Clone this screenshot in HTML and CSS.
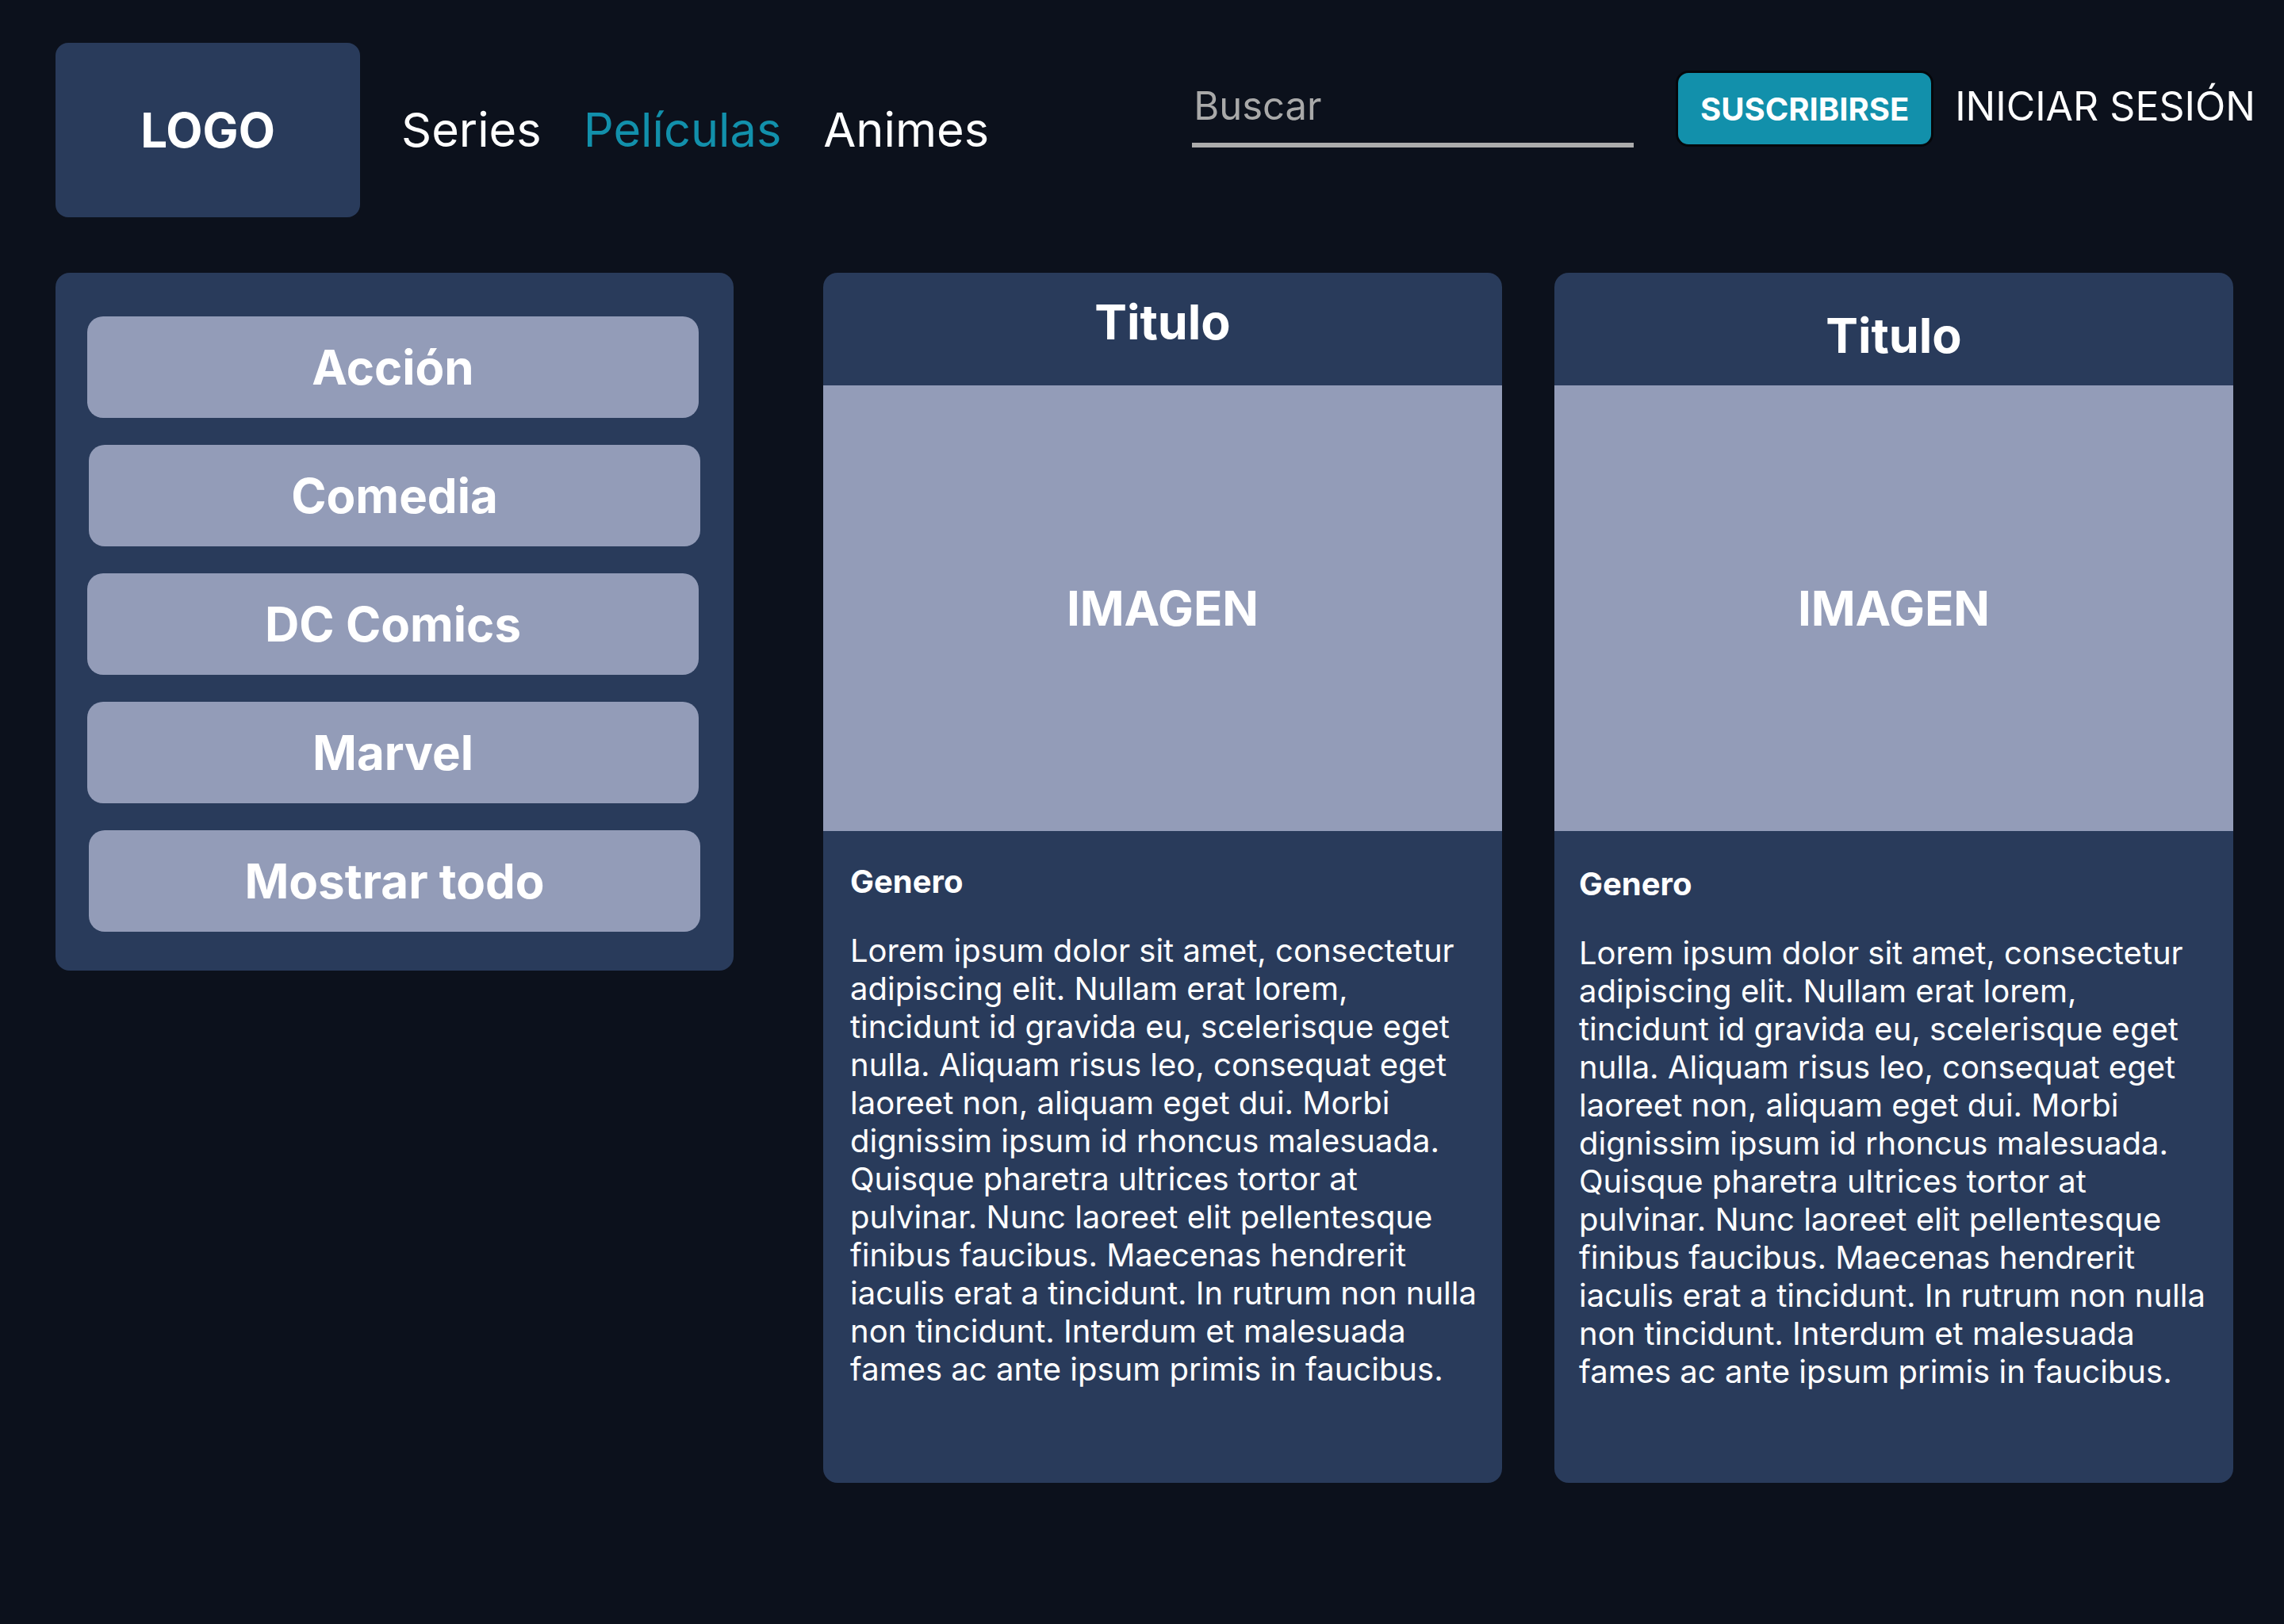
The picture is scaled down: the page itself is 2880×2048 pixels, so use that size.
FILE: index.html
```html
<!DOCTYPE html>
<html lang="es">
<head>
<meta charset="utf-8">
<title>Catálogo</title>
<link rel="stylesheet" href="styles.css">
</head>
<body>
<div class="page">
  <header class="topbar">
    <div class="logo">LOGO</div>
    <nav class="nav">
      <a class="nav-link">Series</a>
      <a class="nav-link active">Películas</a>
      <a class="nav-link">Animes</a>
    </nav>
    <div class="search">
      <span class="search-placeholder">Buscar</span>
      <span class="search-line"></span>
    </div>
    <button class="subscribe">SUSCRIBIRSE</button>
    <a class="login">INICIAR SESIÓN</a>
  </header>

  <main class="content">
    <aside class="sidebar">
      <button class="genre">Acción</button>
      <button class="genre shifted">Comedia</button>
      <button class="genre">DC Comics</button>
      <button class="genre">Marvel</button>
      <button class="genre shifted">Mostrar todo</button>
    </aside>

    <article class="card">
      <div class="card-head"><h2 class="card-title">Titulo</h2></div>
      <div class="card-image">IMAGEN</div>
      <div class="card-body">
        <h3 class="card-genre">Genero</h3>
        <p class="card-text">Lorem ipsum dolor sit amet, consectetur adipiscing elit. Nullam erat lorem, tincidunt id gravida eu, scelerisque eget nulla. Aliquam risus leo, consequat eget laoreet non, aliquam eget dui. Morbi dignissim ipsum id rhoncus malesuada. Quisque pharetra ultrices tortor at pulvinar. Nunc laoreet elit pellentesque finibus faucibus. Maecenas hendrerit iaculis erat a tincidunt. In rutrum non nulla non tincidunt. Interdum et malesuada fames ac ante ipsum primis in faucibus.</p>
      </div>
    </article>

    <article class="card card-alt">
      <div class="card-head"><h2 class="card-title">Titulo</h2></div>
      <div class="card-image">IMAGEN</div>
      <div class="card-body">
        <h3 class="card-genre">Genero</h3>
        <p class="card-text">Lorem ipsum dolor sit amet, consectetur adipiscing elit. Nullam erat lorem, tincidunt id gravida eu, scelerisque eget nulla. Aliquam risus leo, consequat eget laoreet non, aliquam eget dui. Morbi dignissim ipsum id rhoncus malesuada. Quisque pharetra ultrices tortor at pulvinar. Nunc laoreet elit pellentesque finibus faucibus. Maecenas hendrerit iaculis erat a tincidunt. In rutrum non nulla non tincidunt. Interdum et malesuada fames ac ante ipsum primis in faucibus.</p>
      </div>
    </article>
  </main>
</div>
</body>
</html>
```
FILE: styles.css
```css
* { box-sizing: border-box; }

html, body {
  margin: 0;
  padding: 0;
  background: #0c111c;
  color: #ffffff;
  font-family: Inter, "Noto Sans", "Liberation Sans", sans-serif;
}

.page {
  width: 2880px;
  min-height: 2048px;
  padding: 54px 0 0 70px;
}

/* ---------- header ---------- */
.topbar {
  display: flex;
  align-items: flex-start;
  height: 220px;
}

.logo {
  width: 384px;
  height: 220px;
  background: #293b5b;
  border-radius: 16px;
  display: flex;
  align-items: center;
  justify-content: center;
  font-size: 60px;
  font-weight: 700;
  line-height: 1;
}

.nav {
  display: flex;
  align-items: center;
  height: 220px;
  margin-left: 52px;
  gap: 53px;
}

.nav-link {
  font-size: 59.5px;
  font-weight: 400;
  line-height: 1.2;
  color: #ffffff;
  text-decoration: none;
}

.nav-link.active { color: #1290ab; }

.search {
  display: flex;
  flex-direction: column;
  margin-left: 256px;
  margin-top: 51px;
  width: 557px;
}

.search-placeholder {
  font-size: 49px;
  line-height: 1.2;
  color: #a9a9a9;
  padding-left: 2px;
}

.search-line {
  display: block;
  height: 6px;
  margin-top: 16px;
  background: #acacac;
}

.subscribe {
  margin-left: 53px;
  margin-top: 35px;
  width: 325px;
  height: 96px;
  background: #1290ab;
  border: 3px solid #05070b;
  border-radius: 16px;
  color: #ffffff;
  font-family: inherit;
  font-size: 40px;
  font-weight: 700;
  padding: 0;
}

.login {
  margin-left: 27px;
  margin-top: 50px;
  font-size: 50px;
  line-height: 1.2;
  color: #ffffff;
}

/* ---------- content ---------- */
.content {
  display: flex;
  align-items: flex-start;
  margin-top: 70px;
  gap: 66px;
}

.sidebar {
  width: 855px;
  height: 880px;
  margin-right: 47px;
  background: #293b5b;
  border-radius: 18px;
  padding: 55px 44px 0 40px;
  display: flex;
  flex-direction: column;
  gap: 34px;
}

.genre {
  height: 128px;
  width: 771px;
  background: #939cb8;
  border: none;
  border-radius: 20px;
  color: #ffffff;
  font-family: inherit;
  font-size: 60px;
  font-weight: 700;
  padding: 0;
}

.genre.shifted { margin-left: 2px; }

.card {
  width: 856px;
  height: 1526px;
  background: #293b5b;
  border-radius: 18px;
  overflow: hidden;
  display: flex;
  flex-direction: column;
}

.card-head {
  height: 142px;
  padding-top: 26px;
  text-align: center;
}

.card-title {
  margin: 0;
  font-size: 61px;
  font-weight: 700;
  line-height: 1.2;
}

.card-alt .card-head { padding-top: 43px; }

.card-image {
  height: 562px;
  background: #939cb8;
  display: flex;
  align-items: center;
  justify-content: center;
  font-size: 60px;
  font-weight: 700;
}

.card-body {
  padding: 40px 27px 0 34px;
}

.card-alt .card-body { padding: 43px 30px 0 31px; }

.card-genre {
  margin: 0;
  font-size: 40px;
  font-weight: 700;
  line-height: 48px;
}

.card-text {
  margin: 39px 0 0 0;
  font-size: 40px;
  line-height: 48px;
  font-weight: 400;
}
```
